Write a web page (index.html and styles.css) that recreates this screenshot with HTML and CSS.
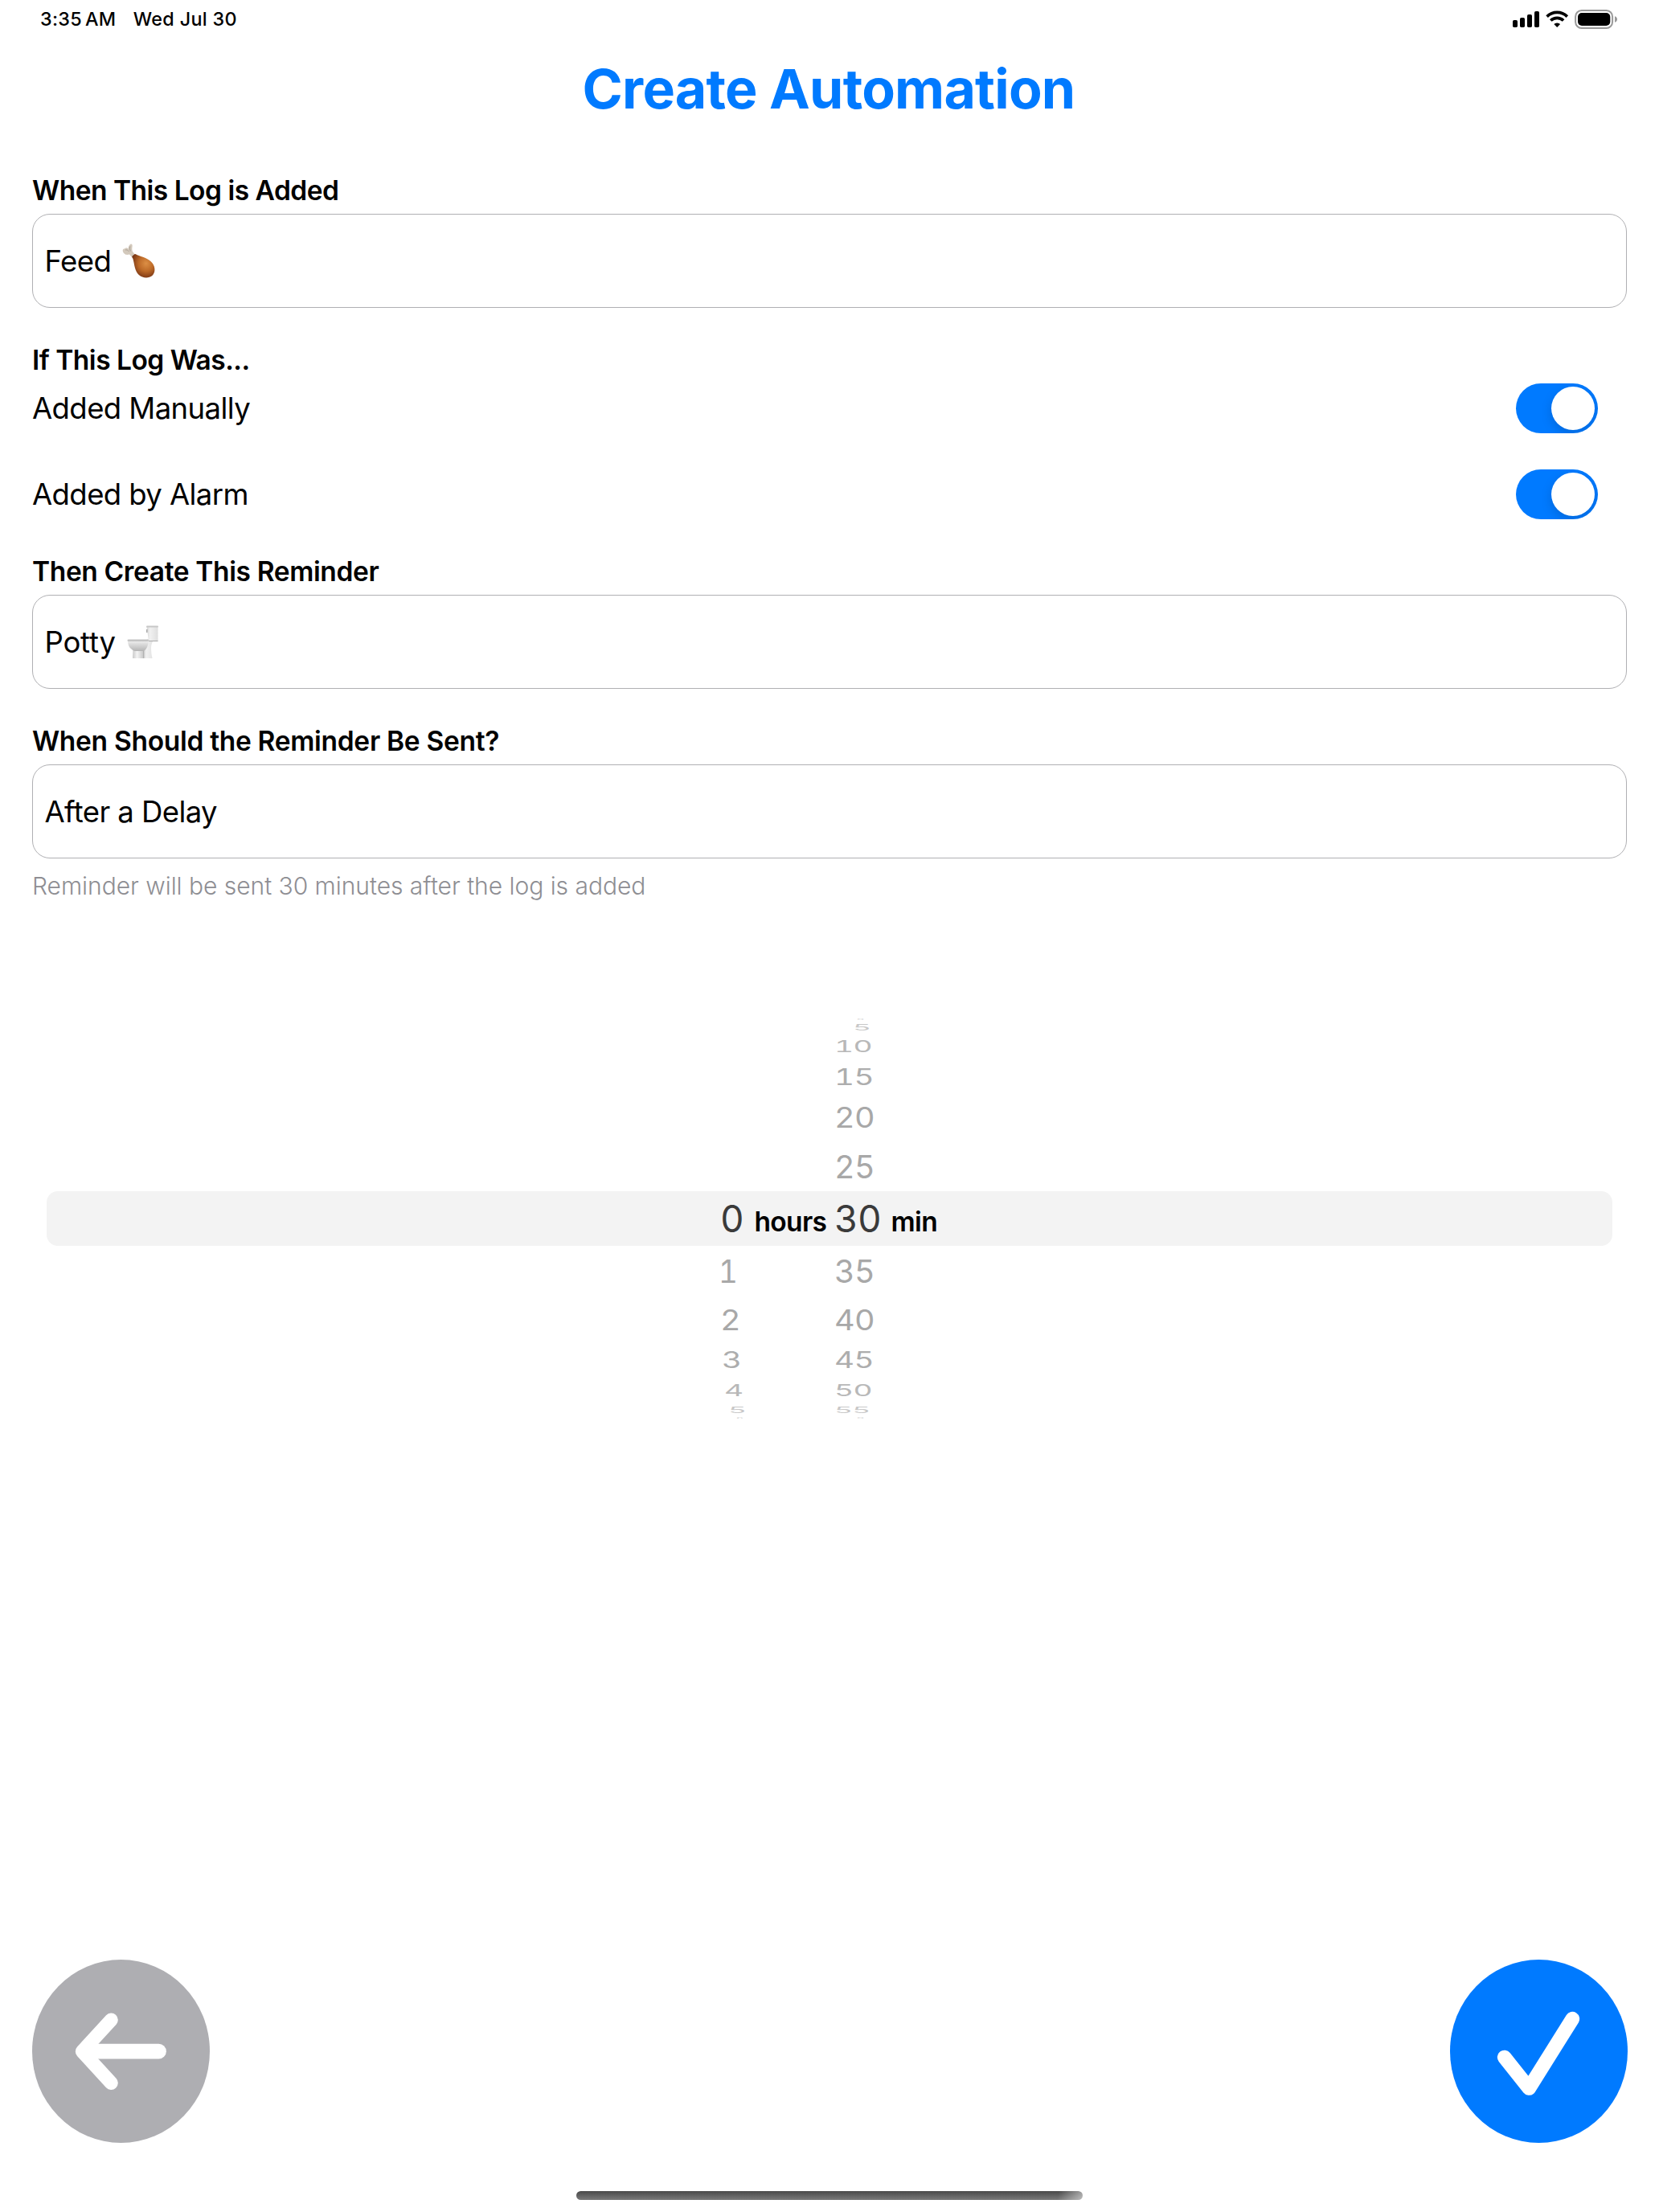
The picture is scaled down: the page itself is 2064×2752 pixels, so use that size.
FILE: index.html
```html
<!DOCTYPE html>
<html lang="en">
<head>
<meta charset="utf-8">
<title>Create Automation</title>
<link rel="stylesheet" href="styles.css">
</head>
<body>
<div class="screen">
  <header class="status-bar">
    <div class="status-left"><span class="time">3:35<span class="meridiem">AM</span></span><span class="date">Wed Jul 30</span></div>
    <svg class="status-icons" width="132" height="24" viewBox="0 0 132 24">
      <rect x="0" y="13" width="6" height="9" rx="1.8"/>
      <rect x="9" y="10" width="6" height="12" rx="1.8"/>
      <rect x="18" y="6" width="6" height="16" rx="1.8"/>
      <rect x="27" y="2" width="6" height="20" rx="1.8"/>
      <g fill="none" stroke="#000" stroke-width="3.7">
        <path d="M42.6 8.6a18 18 0 0 1 25.2 0"/>
        <path d="M47.3 13.5a11.3 11.3 0 0 1 15.8 0"/>
      </g>
      <path d="M55.2 22l-3.9-4a5.6 5.6 0 0 1 7.8 0z"/>
      <rect x="78.1" y="1.1" width="46" height="21.8" rx="7.6" fill="none" stroke="#999" stroke-width="2"/>
      <rect x="81" y="4" width="40.3" height="16" rx="5"/>
      <path d="M127 8.2q3 1 3 3.8t-3 3.8z" fill="#999"/>
    </svg>
  </header>
  <h1 class="title">Create Automation</h1>
  <main class="form">
    <section class="group">
      <h2 class="label">When This Log is Added</h2>
      <div class="field"><span class="value">Feed</span>
        <svg class="drumstick" width="42" height="44" viewBox="0 0 42 44">
          <defs>
            <radialGradient id="meat" cx=".62" cy=".4" r=".65"><stop offset="0" stop-color="#dc8f45"/><stop offset=".5" stop-color="#bd6a28"/><stop offset="1" stop-color="#773414"/></radialGradient>
          </defs>
          <path d="M9.500 1.500C11-.4 13 .8 12.600 3.500c-.3 2.300-.6 4.500.4 6.500l4 5-3.500 3.500-4.500-5c-2 .6-4.500.8-6-.7C-.2 10.400-.1 6 3.600 6.200 4.800 4.200 7 5.600 7.300 6.700 7.800 4.800 7.800 3 9.500 1.500z" fill="#d3c9bc"/>
          <path d="M4 8c2-.7 3 .7 4.500 1.800M10 3.500c-.8 2-.6 4 .4 6" fill="none" stroke="#aaa095" stroke-width="1"/>
          <path d="M15.500 13.200c.8-.7 2 .5 3.200 1 5.500 2.300 14 3.600 19 10.400 3.800 5.200 3.600 12-.4 15.400-4.300 3.600-12 3.200-16.500-1C15.500 34 15.300 26 13.600 19.500c-.4-1.800-1.800-2.500-1.200-3.500.7-1.200 2-1.800 3.100-2.800z" fill="url(#meat)"/>
        </svg>
      </div>
    </section>
    <section class="group">
      <h2 class="label">If This Log Was...</h2>
      <div class="rows">
        <div class="row"><span class="value">Added Manually</span><span class="switch"><span class="knob"></span></span></div>
        <div class="row"><span class="value">Added by Alarm</span><span class="switch"><span class="knob"></span></span></div>
      </div>
    </section>
    <section class="group">
      <h2 class="label label-mid">Then Create This Reminder</h2>
      <div class="field"><span class="value potty">Potty</span>
        <svg class="toilet" width="40" height="42" viewBox="0 0 40 42">
          <defs>
            <linearGradient id="bowl" x2="1" y2="0"><stop offset="0" stop-color="#c9c9c9"/><stop offset=".4" stop-color="#f4f4f4"/><stop offset="1" stop-color="#c4c4c4"/></linearGradient>
            <linearGradient id="tank" x2="1" y2="0"><stop offset="0" stop-color="#d4d4d4"/><stop offset=".3" stop-color="#f1f1f1"/><stop offset="1" stop-color="#dedede"/></linearGradient>
            <linearGradient id="rim" x2="0" y2="1"><stop offset="0" stop-color="#f0f0f0"/><stop offset="1" stop-color="#b4b4b4"/></linearGradient>
          </defs>
          <path d="M25 17h9c-3 4-4 7-4 11 0 5 .5 9 1.500 13H20V28z" fill="url(#tank)"/>
          <path d="M7.500 30h13.500V41H7z" fill="url(#bowl)"/>
          <path d="M20.800 31V41" stroke="#aaa" stroke-width="1"/>
          <path d="M1 19h25.500c0 7-2.500 11.500-6 13h-11C4.500 30 1 26 1 19z" fill="url(#rim)"/>
          <path d="M24.500 2h14v17.500H27z" fill="url(#tank)"/>
          <path d="M27 19.500h11.500" stroke="#aaa" stroke-width="1"/>
          <rect x="24" y=".5" width="15" height="2" rx="1" fill="#c7c7c7"/>
          <rect x="24" y="5" width="1.500" height="4" fill="#aaa"/>
          <rect x=".5" y="17.500" width="26.500" height="2.600" rx="1.300" fill="#c4c4c4"/>
        </svg>
      </div>
    </section>
    <section class="group">
      <h2 class="label label-wide">When Should the Reminder Be Sent?</h2>
      <div class="field"><span class="value">After a Delay</span></div>
      <p class="hint">Reminder will be sent 30 minutes after the log is added</p>
    </section>
    <section class="picker">
      <div class="wheel hours">
        <div class="r6"></div><div class="r5"></div><div class="r4"></div><div class="r3"></div><div class="r2"></div><div class="r1"></div>
        <div class="r0"><span>0</span></div>
        <div class="r1 narrow"><span>1</span></div>
        <div class="r2"><span>2</span></div>
        <div class="r3"><span>3</span></div>
        <div class="r4"><span>4</span></div>
        <div class="r5"><span>5</span></div>
        <div class="r6"><span>6</span></div>
      </div>
      <span class="unit unit-hours">hours</span>
      <div class="wheel minutes">
        <div class="r6"><span>0</span></div>
        <div class="r5 one"><span>5</span></div>
        <div class="r4"><span>10</span></div>
        <div class="r3"><span>15</span></div>
        <div class="r2"><span>20</span></div>
        <div class="r1"><span>25</span></div>
        <div class="r0"><span>30</span></div>
        <div class="r1"><span>35</span></div>
        <div class="r2"><span>40</span></div>
        <div class="r3"><span>45</span></div>
        <div class="r4"><span>50</span></div>
        <div class="r5"><span>55</span></div>
        <div class="r6"><span>0</span></div>
      </div>
      <span class="unit unit-min">min</span>
    </section>
  </main>
  <footer class="actions">
    <button class="round back" aria-label="Back">
      <svg width="221" height="228" viewBox="0 0 221 228" fill="none" stroke="#fff" stroke-linecap="round" stroke-linejoin="round">
        <path stroke-width="17" d="M98.300 75L62.300 114.200 98.300 153.400"/>
        <path stroke-width="18.700" d="M68 114.200H157.500"/>
      </svg>
    </button>
    <button class="round confirm" aria-label="Confirm">
      <svg width="221" height="228" viewBox="0 0 221 228" fill="none" stroke="#fff" stroke-linecap="round" stroke-linejoin="round">
        <path stroke-width="17.700" d="M67.700 121.500L98.300 160 152.300 73.700"/>
      </svg>
    </button>
  </footer>
  <div class="home-indicator"></div>
</div>
</body>
</html>
```
FILE: styles.css
```css
* { box-sizing: border-box; margin: 0; padding: 0; }
body { background: #fff; font-family: Inter, "Liberation Sans", sans-serif; color: #000; }
.screen { width: 2064px; height: 2752px; display: flex; flex-direction: column; background: #fff; overflow: hidden; }
svg { display: block; flex: none; }

.status-bar { height: 48px; padding: 0 50px; display: flex; align-items: center; justify-content: space-between; }
.status-left { display: flex; gap: 21.5px; font-size: 23.3px; font-weight: 500; line-height: 48px; white-space: nowrap; }
.time { letter-spacing: .3px; }
.meridiem { margin-left: 4px; }
.date { letter-spacing: .35px; }

.title { height: 84px; margin-top: 20px; padding-right: 2px; line-height: 84px; font-size: 68px; font-weight: 700; color: #007aff; text-align: center; letter-spacing: -.76px; }

.form { margin-top: 64px; padding: 0 40px; display: flex; flex-direction: column; gap: 44px; }
.group { display: flex; flex-direction: column; }
.label { height: 42px; line-height: 42px; margin-bottom: 8px; font-size: 33.5px; font-weight: 600; white-space: nowrap; letter-spacing: -.5px; }
.label-mid { letter-spacing: -.37px; }
.label-wide { letter-spacing: -.3px; }
.field { height: 117px; border: 1px solid #b0b0b3; border-radius: 22px; padding-left: 14.5px; display: flex; align-items: center; }
.value { font-size: 36.5px; white-space: nowrap; letter-spacing: -.58px; }
.potty { letter-spacing: -.2px; }
.drumstick { margin-left: 14px; }
.toilet { margin-left: 14px; }
.rows { display: flex; flex-direction: column; gap: 45px; }
.row { height: 62px; display: flex; align-items: center; justify-content: space-between; padding-right: 36px; }
.switch { width: 102px; height: 62px; border-radius: 31px; background: #007aff; padding: 4px; display: flex; justify-content: flex-end; overflow: hidden; }
.knob { width: 54px; height: 54px; border-radius: 50%; background: #fff; box-shadow: 0 5px 14px rgba(0,0,0,.15); }
.hint { height: 40px; line-height: 40px; margin-top: 14px; font-size: 30px; font-weight: 300; color: #8e8e93; white-space: nowrap; letter-spacing: -.03px; }

.picker { height: 502px; margin: 99px 18px 0; padding-left: 838px; display: flex; align-items: center; position: relative; isolation: isolate; }
/* selection band behind the wheels */
.picker::before { content: ""; position: absolute; z-index: -1; left: 0; right: 0; top: 217px; height: 68px; border-radius: 14px; background: #f3f3f3; }
.wheel { display: flex; flex-direction: column; font-size: 46px; font-feature-settings: "tnum"; color: #a8a8a8; width: 42.5px; }
.wheel.minutes { width: 70.5px; }
.wheel > div { display: flex; align-items: center; line-height: 0; }
.wheel span { transform-origin: 0 50%; letter-spacing: -.8px; }
.wheel .r0 { height: 68px; color: #3a3a3a; }
.r1 { height: 62.6px; }
.r2 { height: 58.2px; }
.r3 { height: 42.6px; color: #adadad; }
.r4 { height: 33.8px; color: #b8b8b8; }
.r5 { height: 14px; color: #c8c8c8; }
.r6 { height: 5.6px; color: #d4d4d4; }
/* rows foreshorten as they roll away from the middle */
.r1 span { transform: scale(.86, .87); }
.r2 span { transform: scale(.86, .758); }
.r3 span { transform: scale(.84, .606); }
.r4 span { transform: scale(.81, .44); }
.r5 span { transform: scale(.77, .232); }
.r6 span { transform: scale(.3, .03); }
.narrow span { margin-left: -2px; transform: scale(.8, .87); }
.hours .r3 { padding-left: 1.5px; }
.hours .r4 { padding-left: 5px; }
.hours .r5 { padding-left: 10px; }
.hours .r6 { padding-left: 20px; }
.minutes .one { padding-left: 23px; }
.minutes .r6 { padding-left: 28px; }
.unit { font-size: 33.5px; font-weight: 600; line-height: 40px; margin-top: 7px; letter-spacing: -.65px; }
.unit-hours { width: 99.5px; }

.actions { margin-top: 671px; padding: 0 39px 0 40px; display: flex; justify-content: space-between; }
.round { width: 221px; height: 228px; border: 0; border-radius: 50%; }
.back { background: #aeaeb2; }
.confirm { background: #007aff; }
.home-indicator { width: 630px; height: 11px; margin: 60px 0 0 717px; border-radius: 6px; background: linear-gradient(100deg, transparent 95%, rgba(255,255,255,.5)), linear-gradient(#484848, #7a7a7a); }
```
